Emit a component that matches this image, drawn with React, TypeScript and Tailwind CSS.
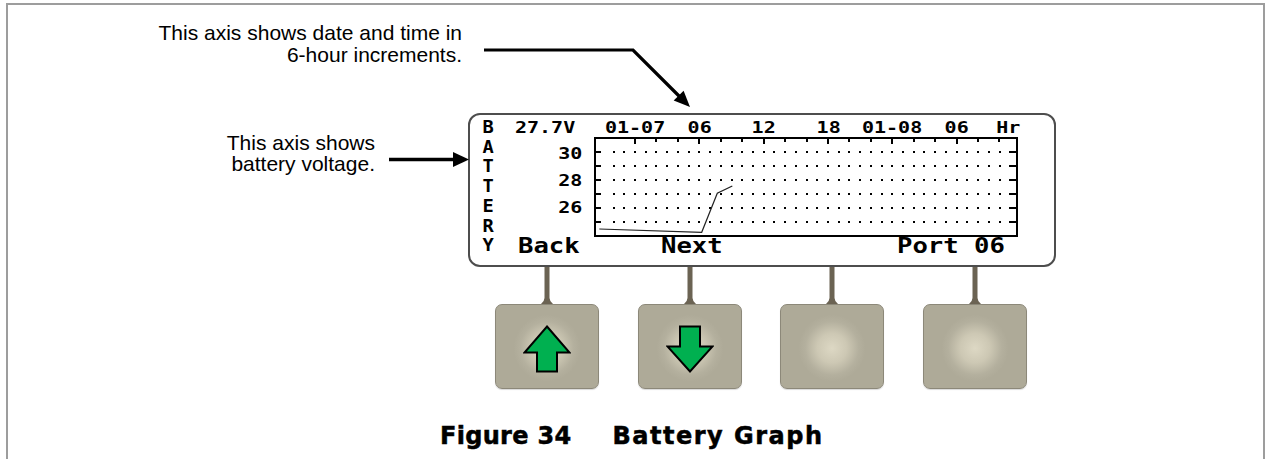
import React from "react";

const MONO = "font-['DejaVu_Sans_Mono',monospace]";

function UpArrow() {
  return (
    <svg width="48" height="48" viewBox="0 0 48 48" className="block">
      <polygon
        points="24,1.5 46.5,27.5 34,27.5 34,46.5 14,46.5 14,27.5 1.5,27.5"
        fill="#00b050"
        stroke="#000"
        strokeWidth="2"
      />
    </svg>
  );
}

function DownArrow() {
  return (
    <svg width="48" height="48" viewBox="0 0 48 48" className="block">
      <polygon
        points="14,1.5 34,1.5 34,21.5 46.5,21.5 24,46.5 1.5,21.5 14,21.5"
        fill="#00b050"
        stroke="#000"
        strokeWidth="2"
      />
    </svg>
  );
}

function Graph() {
  const rows = [15, 29, 43, 57, 71, 85];
  const cols = Array.from({ length: 37 }, (_, i) => Math.round(19.6 + 10.72 * i));
  const ticks = Array.from({ length: 18 }, (_, j) => Math.round(41 + 21.44 * j));
  return (
    <svg width="424" height="100" viewBox="0 0 424 100" className="block shrink-0">
      <rect x="1" y="1" width="422" height="98" fill="#fff" stroke="#000" strokeWidth="2" />
      {rows.map((y) => (
        <g key={y}>
          <line x1="2" x2="7" y1={y} y2={y} stroke="#000" strokeWidth="2" />
          <line x1="415" x2="422" y1={y} y2={y} stroke="#000" strokeWidth="2" />
          {cols.map((x) => (
            <rect key={x} x={x - 1} y={y - 1} width="2" height="2" fill="#000" />
          ))}
        </g>
      ))}
      {ticks.map((x, j) => (
        <line key={x} x1={x} x2={x} y1="2" y2={j % 3 === 0 ? 7 : 5} stroke="#000" strokeWidth="2" />
      ))}
      <polyline
        points="5.3,92 107.7,95.3 123.3,56.3 138.3,49"
        fill="none"
        stroke="#222"
        strokeWidth="1.2"
      />
    </svg>
  );
}

function Stem() {
  return (
    <svg width="14" height="37" viewBox="0 0 14 37" className="block">
      <path d="M4.5 0 H9.5 V31 Q9.5 34 13 37 H1 Q4.5 34 4.5 31 Z" fill="#6b6353" />
    </svg>
  );
}

function KeyButton({ children }: { children?: React.ReactNode }) {
  return (
    <div className="flex flex-col items-center w-[104px]">
      <Stem />
      <div className="w-full h-[85px] rounded-[7px] border border-[#8c8879] shadow-[0_1px_1px_rgba(0,0,0,0.15)] bg-[radial-gradient(circle_at_50%_52%,#ddd8c4_0%,#cdc8b4_22%,#b4b09e_40%,#aeaa98_50%)] flex items-center justify-center">
        <div className="mt-[4px]">{children}</div>
      </div>
    </div>
  );
}

export default function App() {
  const timeLabels = ["01-07", "06", "12", "18", "01-08", "06"];
  return (
    <div className="relative w-[1265px] h-[459px] bg-white overflow-hidden pt-[3px] pl-[6px] font-['Liberation_Sans',Arial,sans-serif] text-black">
      <div className="h-[456px] border-t-2 border-l-2 border-r-2 border-[#9d9d9d] flex flex-col">
        {/* top annotation */}
        <div className="mt-[16.5px] w-[454px] text-right text-[21px] leading-[22px]">
          <div>This axis shows date and time in</div>
          <div>6-hour increments.</div>
        </div>

        {/* main row */}
        <div className="mt-[47.5px] flex items-start">
          <div className="w-[367px] mt-[18.5px] text-right text-[21px] leading-[21px]">
            <div>This axis shows</div>
            <div>battery voltage.</div>
          </div>

          <div className={`ml-[93px] w-[588px] h-[154px] rounded-[12px] border-2 border-[#4d4d4d] flex ${MONO}`}>
            <div className="ml-[8px] mt-[3px] w-[20px] flex flex-col items-center text-[17px] font-bold leading-[19.7px]">
              {"BATTERY".split("").map((c, i) => (
                <span key={i} className="inline-block scale-x-[1.1]">
                  {c}
                </span>
              ))}
            </div>

            <div className="ml-[17px] flex flex-col">
              {/* header row */}
              <div className="mt-[5px] flex h-[16px] text-[16px] font-bold leading-[16px] whitespace-nowrap">
                <div className="w-[88px]">
                  <span className="inline-block origin-left scale-x-[1.25]">27.7V</span>
                </div>
                {timeLabels.map((t, i) => (
                  <div key={i} className="w-[64.33px] text-center">
                    <span className="inline-block scale-x-[1.25]">{t}</span>
                  </div>
                ))}
                <div className="w-[31px] text-right">
                  <span className="inline-block origin-right scale-x-[1.25]">Hr</span>
                </div>
              </div>

              {/* graph row */}
              <div className="mt-[1px] flex">
                <div className="w-[67px] pt-[9px] flex flex-col gap-[11px] text-right text-[16px] font-bold leading-[16px]">
                  <div>
                    <span className="inline-block origin-right scale-x-[1.25]">30</span>
                  </div>
                  <div>
                    <span className="inline-block origin-right scale-x-[1.25]">28</span>
                  </div>
                  <div>
                    <span className="inline-block origin-right scale-x-[1.25]">26</span>
                  </div>
                </div>
                <div className="ml-[12px]">
                  <Graph />
                </div>
              </div>

              {/* soft-key labels */}
              <div className="mt-[-1.5px] flex text-[21px] font-bold leading-[21px] whitespace-nowrap">
                <div className="ml-[3px] w-[143px]">
                  <span className="inline-block origin-left scale-x-[1.22]">Back</span>
                </div>
                <div className="w-[236px]">
                  <span className="inline-block origin-left scale-x-[1.22]">Next</span>
                </div>
                <div>
                  <span className="inline-block origin-left scale-x-[1.22]">Port 06</span>
                </div>
              </div>
            </div>
          </div>
        </div>

        {/* buttons */}
        <div className="ml-[487px] flex gap-[38.7px]">
          <KeyButton>
            <UpArrow />
          </KeyButton>
          <KeyButton>
            <DownArrow />
          </KeyButton>
          <KeyButton />
          <KeyButton />
        </div>

        {/* caption */}
        <div className="mt-[33px] ml-[432px] flex font-['DejaVu_Sans',sans-serif] font-bold text-[24px] leading-[28px] whitespace-nowrap [-webkit-text-stroke:0.5px_black]">
          <span className="tracking-[0.3px]">Figure 34</span>
          <span className="ml-[41px] tracking-[1.5px]">Battery Graph</span>
        </div>
      </div>

      {/* annotation arrows overlay */}
      <svg
        className="absolute inset-0 pointer-events-none"
        width="1265"
        height="459"
        viewBox="0 0 1265 459"
      >
        <polyline points="484,50 633,50 679.5,96.5" fill="none" stroke="#000" strokeWidth="3.2" />
        <polygon points="690,107 673.7,100.6 683.6,90.7" fill="#000" />
        <line x1="389" y1="159.5" x2="455" y2="159.5" stroke="#000" strokeWidth="3.5" />
        <polygon points="469,159.5 453,152 453,167" fill="#000" />
      </svg>
    </div>
  );
}
